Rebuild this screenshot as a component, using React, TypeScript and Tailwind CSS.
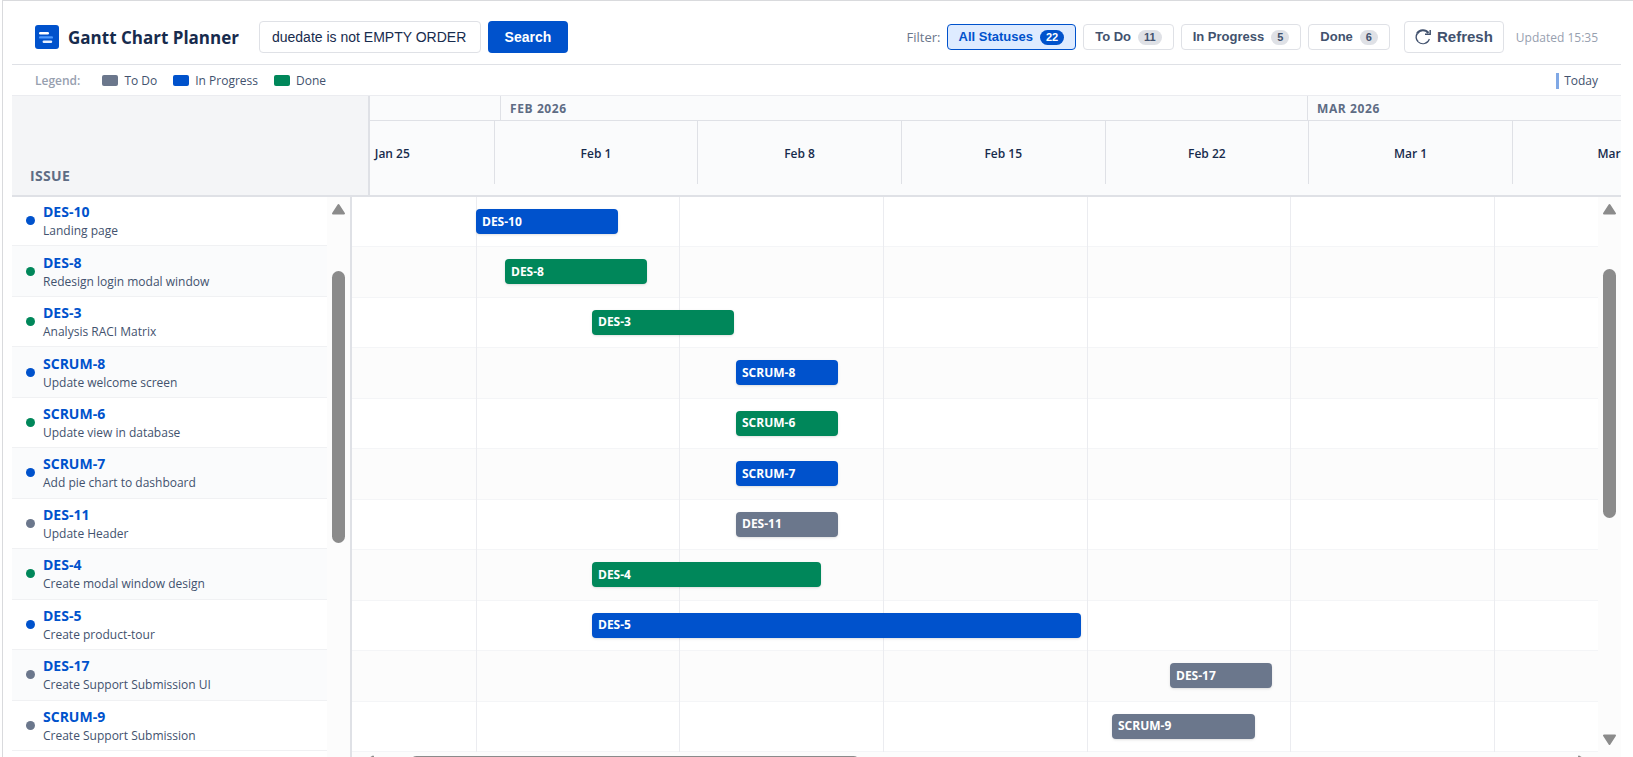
import React, { useState } from 'react';
import clsx from 'clsx';

type Status = 'todo' | 'progress' | 'done';

interface Issue {
  key: string;
  title: string;
  status: Status;
  start: number;
  length: number;
}

const statusColor: Record<Status, string> = {
  todo: 'bg-[#6b778c]',
  progress: 'bg-[#0052cc]',
  done: 'bg-[#00875a]',
};

const statusLabel: Record<Status, string> = {
  todo: 'To Do',
  progress: 'In Progress',
  done: 'Done',
};

// start and length are in timeline pixels
const issues: Issue[] = [
  { key: 'DES-10', title: 'Landing page', status: 'progress', start: 124, length: 142 },
  { key: 'DES-8', title: 'Redesign login modal window', status: 'done', start: 153, length: 142 },
  { key: 'DES-3', title: 'Analysis RACI Matrix', status: 'done', start: 240, length: 142 },
  { key: 'SCRUM-8', title: 'Update welcome screen', status: 'progress', start: 384, length: 102 },
  { key: 'SCRUM-6', title: 'Update view in database', status: 'done', start: 384, length: 102 },
  { key: 'SCRUM-7', title: 'Add pie chart to dashboard', status: 'progress', start: 384, length: 102 },
  { key: 'DES-11', title: 'Update Header', status: 'todo', start: 384, length: 102 },
  { key: 'DES-4', title: 'Create modal window design', status: 'done', start: 240, length: 229 },
  { key: 'DES-5', title: 'Create product-tour', status: 'progress', start: 240, length: 489 },
  { key: 'DES-17', title: 'Create Support Submission UI', status: 'todo', start: 818, length: 102 },
  { key: 'SCRUM-9', title: 'Create Support Submission', status: 'todo', start: 760, length: 143 },
];

const weeks = ['Jan 25', 'Feb 1', 'Feb 8', 'Feb 15', 'Feb 22', 'Mar 1', 'Mar 8', 'Mar 15', 'Mar 22', 'Mar 29', 'Apr 5'];

const filters = [
  { id: 'all', label: 'All Statuses', count: 22 },
  { id: 'todo', label: 'To Do', count: 11 },
  { id: 'progress', label: 'In Progress', count: 5 },
  { id: 'done', label: 'Done', count: 6 },
];

const Logo = () => (
  <svg width="24" height="24" viewBox="0 0 24 24" aria-hidden="true">
    <rect width="24" height="24" rx="3" fill="#0052cc" />
    <rect x="4" y="7" width="10" height="2.4" rx="1.2" fill="#fff" />
    <rect x="4" y="11.2" width="14" height="2.4" rx="1.2" fill="#4c9aff" />
    <rect x="7.6" y="15.4" width="9.6" height="2.6" rx="1.2" fill="#e6f0ff" />
  </svg>
);

const RefreshIcon = () => (
  <svg width="16" height="16" viewBox="0 0 16 16" fill="none" stroke="#42526e" aria-hidden="true">
    <path d="M13.4 4A6.8 6.8 0 0 0 2.2 4.4" strokeWidth="2.2" />
    <path d="M2.4 4.2A6.8 6.8 0 0 0 3.2 12.8" strokeWidth="1.6" />
    <path d="M3.2 12.8A6.8 6.8 0 0 0 14.4 10" strokeWidth="1.1" />
    <path d="M15.2 1V5.2H10" strokeWidth="1.5" />
  </svg>
);

const ScrollArrow = ({ down = false }: { down?: boolean }) => (
  <svg width="15" height="12" viewBox="0 0 15 12" className={clsx('shrink-0', down && 'rotate-180')} aria-hidden="true">
    <path d="M7.5 2L13 10.5H2Z" fill="#8b8b8b" stroke="#8b8b8b" strokeWidth="2" strokeLinejoin="round" />
  </svg>
);

const App: React.FC = () => {
  const [active, setActive] = useState('all');
  const [query, setQuery] = useState('duedate is not EMPTY ORDER BY duedate ASC');

  return (
    <div className="h-screen overflow-hidden bg-white pl-[2px] font-['Open_Sans','Noto_Sans',sans-serif] text-[#172b4d]">
      <div className="h-full border-t border-l border-[#d9dadd] pt-2 pr-3 pl-[9px]">
        {/* Toolbar */}
        <header className="flex items-center justify-between border-b border-[#dfe1e6] px-[23px] pt-3 pb-[11px]">
          <div className="flex items-center">
            <Logo />
            <h1 className="ml-[9px] pt-px text-[17px] font-bold whitespace-nowrap">Gantt Chart Planner</h1>
            <form className="ml-5 flex gap-[7px]" onSubmit={(e) => e.preventDefault()}>
              <input
                type="text"
                aria-label="JQL query"
                value={query}
                onChange={(e) => setQuery(e.target.value)}
                className="h-8 w-[222px] rounded border border-[#dfe1e6] bg-white px-3 font-['Liberation_Sans',sans-serif] text-[14px] outline-none"
              />
              <button type="submit" className="h-8 w-20 rounded bg-[#0052cc] font-['Liberation_Sans',sans-serif] text-sm font-bold text-white">
                Search
              </button>
            </form>
          </div>

          <div className="flex items-center">
            <span className="mr-[6px] pt-[2px] text-[13px] font-medium text-[#6b778c]">Filter:</span>
            <div className="flex gap-[7px]">
              {filters.map((f) => (
                <button
                  key={f.id}
                  type="button"
                  aria-pressed={active === f.id}
                  onClick={() => setActive(f.id)}
                  className={clsx(
                    "flex h-[26px] items-center gap-[7px] rounded border px-[11px] font-['Liberation_Sans',sans-serif] text-[13px] font-bold",
                    active === f.id ? 'border-[#0052cc] bg-[#deebff] text-[#0052cc]' : 'border-[#dfe1e6] bg-white text-[#42526e]',
                  )}
                >
                  {f.label}
                  <span
                    className={clsx(
                      'rounded-full px-[6px] text-[11px] leading-[15px]',
                      active === f.id ? 'bg-[#0052cc] text-white' : 'bg-[#dfe1e6] text-[#42526e]',
                    )}
                  >
                    {f.count}
                  </span>
                </button>
              ))}
            </div>
            <button
              type="button"
              className="ml-[14px] flex h-8 items-center gap-[6px] rounded border border-[#dfe1e6] px-[10px] font-['Liberation_Sans',sans-serif] text-[15px] font-bold text-[#42526e]"
            >
              <RefreshIcon />
              Refresh
            </button>
            <span className="ml-3 pt-[2px] text-[12px] text-[#97a0af]">Updated 15:35</span>
          </div>
        </header>

        {/* Legend */}
        <div className="flex h-[31px] items-center justify-between border-b border-[#ebecf0] px-[23px] pt-px text-[12px] text-[#42526e]">
          <div className="flex items-center gap-4">
            <span className="mr-[6px] font-semibold text-[#97a0af]">Legend:</span>
            {(['todo', 'progress', 'done'] as Status[]).map((s) => (
              <span key={s} className="flex items-center gap-[6px]">
                <span className={clsx('h-[11px] w-4 rounded-xs', statusColor[s])} />
                {statusLabel[s]}
              </span>
            ))}
          </div>
          <span className="flex items-center gap-[5px]">
            <span className="h-4 w-[3px] bg-[#80a8e5]" />
            Today
          </span>
        </div>

        {/* Column heads */}
        <div className="flex h-[101px] border-b-2 border-[#dfe1e6] bg-[#fafbfc]">
          <div className="flex w-[358px] shrink-0 items-end border-r-2 border-[#dfe1e6] bg-[#f4f5f7] pb-[9px] pl-[18px]">
            <span className="text-[14px] font-bold tracking-wide text-[#5e6c84]">ISSUE</span>
          </div>
          <div className="min-w-0 flex-1 overflow-hidden">
            <div className="-ml-[79px] w-[2240px]">
              <div className="flex h-[25px] border-b border-[#dfe1e6] text-[12px] leading-[26px] font-bold tracking-wider text-[#5e6c84]">
                <div className="w-[210px] border-r border-[#dfe1e6]" />
                <div className="w-[807px] border-r border-[#dfe1e6] pl-[9px]">FEB 2026</div>
                <div className="flex-1 pl-[9px]">MAR 2026</div>
              </div>
              <div className="flex h-[63px] text-[12px] font-semibold">
                {weeks.map((w) => (
                  <div key={w} className="flex flex-1 items-center justify-center border-r border-[#dfe1e6] pt-[3px]">
                    {w}
                  </div>
                ))}
              </div>
            </div>
          </div>
        </div>

        {/* Chart body */}
        <div className="flex h-[580px]">
          <div className="flex w-[340px] shrink-0 overflow-hidden border-r-2 border-[#dfe1e6]">
            <ul className="-mt-px grid h-[555px] flex-1 auto-rows-fr">
              {issues.map((issue) => (
                <li
                  key={issue.key}
                  className="flex items-center gap-2 border-b border-[#f0f1f3] pl-[14px] odd:bg-white even:bg-[#fafbfc]"
                >
                  <span className={clsx('size-[9px] rounded-full', statusColor[issue.status])} />
                  <div className="pt-px">
                    <a href={`#${issue.key}`} className="block text-[14px] leading-5 font-bold text-[#0052cc]">
                      {issue.key}
                    </a>
                    <p className="text-[12px] leading-[18px] text-[#42526e]">{issue.title}</p>
                  </div>
                </li>
              ))}
            </ul>
            <div className="flex w-[23px] flex-col items-center bg-[#fcfcfc] pt-[6px]">
              <ScrollArrow />
              <div className="mt-14 h-[272px] w-[13px] rounded-full bg-[#8b8b8b]" />
            </div>
          </div>

          <div className="min-w-0 flex-1">
            <div className="flex">
              <div className="relative h-[555px] min-w-0 flex-1 overflow-hidden">
                <div className="grid h-full auto-rows-fr">
                  {issues.map((issue) => (
                    <div key={issue.key} className="border-b border-[#f4f5f7] odd:bg-white even:bg-[#fcfcfc]" />
                  ))}
                </div>
                {/* Week lines */}
                <div className="absolute inset-y-0 left-0 -ml-[79px] flex w-[2240px]">
                  {weeks.map((w) => (
                    <div key={w} className="flex-1 border-r border-[#ebecf0]" />
                  ))}
                </div>
                <div className="absolute inset-0 grid auto-rows-fr">
                  {issues.map((issue) => (
                    <div key={issue.key} className="flex items-start pt-3">
                      <div
                        className={clsx(
                          'flex h-[25px] shrink-0 items-center rounded px-[6px] text-[12px] font-bold text-white shadow-sm',
                          statusColor[issue.status],
                        )}
                        style={{ marginLeft: issue.start, width: issue.length }}
                      >
                        {issue.key}
                      </div>
                    </div>
                  ))}
                </div>
              </div>
              <div className="flex w-[23px] flex-col items-center bg-[#fcfcfc] pt-[6px] pb-[6px]">
                <ScrollArrow />
                <div className="mt-[54px] h-[249px] w-[13px] rounded-full bg-[#8b8b8b]" />
                <div className="flex-1" />
                <ScrollArrow down />
              </div>
            </div>
            <div className="flex h-6 items-start bg-[#fcfcfc] pt-1 pr-[30px] pl-[9px]">
              <span className="-rotate-90">
                <ScrollArrow />
              </span>
              <div className="ml-[34px] h-[13px] w-[450px] rounded-full bg-[#8b8b8b]" />
              <span className="ml-auto rotate-90">
                <ScrollArrow />
              </span>
            </div>
          </div>
        </div>
      </div>
    </div>
  );
};

export default App;
